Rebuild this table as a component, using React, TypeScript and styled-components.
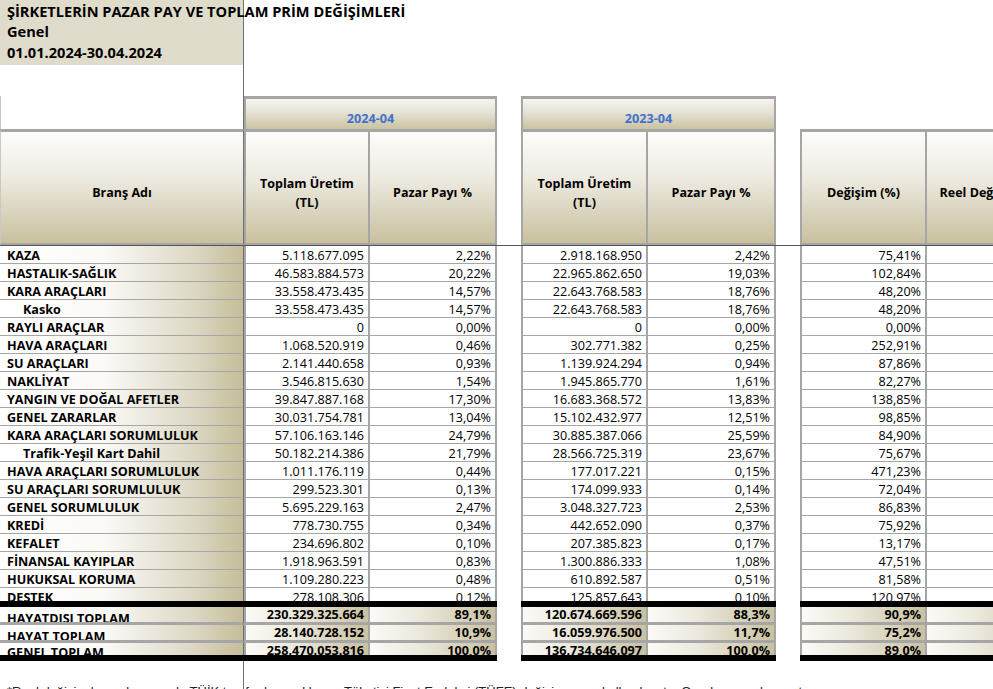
import React from "react";
import styled, { createGlobalStyle } from "styled-components";

const GlobalStyle = createGlobalStyle`
  html, body { margin: 0; padding: 0; background: #ffffff; overflow: hidden; }
  body { font-family: "Open Sans", "Noto Sans", sans-serif; color: #000; }
  #root { width: 993px; height: 689px; overflow: hidden; }
`;

const GRAY = "#a6a6a6";
const DARK = "#707070";
const COLS = "244px 126px 127px 24px 127px 128px 24px 127px 130px";

const Sheet = styled.div`
  width: 1057px;
  display: flex;
  flex-direction: column;
`;

const Row = styled.div<{ $h: number }>`
  display: grid;
  grid-template-columns: ${COLS};
  height: ${(p) => p.$h}px;
`;

const ACell = styled.div`
  box-sizing: border-box;
  border-right: 1px solid ${DARK};
  min-width: 0;
`;

const TitleBlock = styled.div`
  height: 65px;
  background: #e0dccb;
  padding: 0.5px 0 0 7px;
  box-sizing: border-box;
  white-space: nowrap;
`;

const TitleLine = styled.div`
  font-weight: 700;
  font-size: 14.6px;
  line-height: 20.5px;
`;

const BlankA = styled(ACell)`
  border-left: 1px solid #c8c8c8;
`;

const GroupHead = styled.div<{ $span: string }>`
  grid-column: ${(p) => p.$span};
  box-sizing: border-box;
  border: 2px solid ${GRAY};
  border-top-width: 3px;
  border-bottom: 0;
  background: linear-gradient(to bottom, #f6f4ee 0%, #e6e2d4 45%, #cac2a2 100%);
  color: #4170cf;
  font-weight: 700;
  font-size: 12.6px;
  display: flex;
  align-items: center;
  justify-content: center;
  padding-top: 8px;
`;

const HeadCell = styled.div<{ $first?: boolean; $isA?: boolean }>`
  box-sizing: border-box;
  border-top: 3px solid ${GRAY};
  border-bottom: 2px solid ${GRAY};
  border-right: ${(p) => (p.$isA ? `1px solid ${DARK}` : `2px solid ${GRAY}`)};
  border-left: ${(p) => (p.$first ? `2px solid ${GRAY}` : p.$isA ? `1px solid #c8c8c8` : "0")};
  background: linear-gradient(to bottom, #fdfdfb 0%, #eeebe2 40%, #c8c09e 100%);
  font-weight: 700;
  font-size: 12.5px;
  line-height: 19px;
  text-align: center;
  display: flex;
  align-items: center;
  justify-content: center;
  padding-top: 10px;
  white-space: nowrap;
  overflow: hidden;
`;

const Body = styled.div`
  border-top: 1px solid #555;
  display: flex;
  flex-direction: column;
`;

const LabelCell = styled(ACell)<{ $indent?: boolean; $total?: boolean; $last?: boolean; $pad: number }>`
  background: linear-gradient(to right, #ffffff 0%, #fbfaf7 42%, #dedac7 78%, #c5bd99 100%);
  border-bottom: ${(p) => (p.$last ? "0" : `3px solid ${GRAY}`)};
  font-weight: 700;
  font-size: 12.6px;
  line-height: 15px;
  padding-left: ${(p) => (p.$indent ? 23 : 7)}px;
  padding-top: ${(p) => p.$pad}px;
  white-space: nowrap;
  overflow: ${(p) => (p.$last || p.$total ? "hidden" : "visible")};
`;

const ValueCell = styled.div<{ $first?: boolean; $total?: boolean; $last?: boolean; $pad: number }>`
  box-sizing: border-box;
  background: ${(p) =>
    p.$total
      ? "linear-gradient(to right, #fbfaf6 0%, #ebe8dc 40%, #c9c1a0 100%)"
      : "#ffffff"};
  border-bottom: ${(p) => (p.$last ? "0" : `3px solid ${GRAY}`)};
  border-right: 2px solid ${GRAY};
  border-left: ${(p) => (p.$first ? `2px solid ${GRAY}` : "0")};
  font-weight: ${(p) => (p.$total ? 700 : 400)};
  font-size: 12.6px;
  line-height: 15px;
  text-align: right;
  padding-right: 4px;
  padding-top: ${(p) => p.$pad}px;
  white-space: nowrap;
  overflow: ${(p) => (p.$last ? "hidden" : "visible")};
`;

const Gap = styled.div``;

const Bar = styled.div<{ $span: string }>`
  grid-column: ${(p) => p.$span};
  background: #000;
`;

const FootA = styled(ACell)`
  padding: 23px 0 0 7px;
  white-space: nowrap;
  overflow: visible;
  font-family: "Liberation Sans", Arial, sans-serif;
  font-size: 13px;
  line-height: 16px;
  color: #222;
`;

type DataRow = {
  name: string;
  indent?: boolean;
  v: [string, string, string, string, string, string];
};

const rows: DataRow[] = [
  { name: "KAZA", v: ["5.118.677.095", "2,22%", "2.918.168.950", "2,42%", "75,41%", ""] },
  { name: "HASTALIK-SAĞLIK", v: ["46.583.884.573", "20,22%", "22.965.862.650", "19,03%", "102,84%", ""] },
  { name: "KARA ARAÇLARI", v: ["33.558.473.435", "14,57%", "22.643.768.583", "18,76%", "48,20%", ""] },
  { name: "Kasko", indent: true, v: ["33.558.473.435", "14,57%", "22.643.768.583", "18,76%", "48,20%", ""] },
  { name: "RAYLI ARAÇLAR", v: ["0", "0,00%", "0", "0,00%", "0,00%", ""] },
  { name: "HAVA ARAÇLARI", v: ["1.068.520.919", "0,46%", "302.771.382", "0,25%", "252,91%", ""] },
  { name: "SU ARAÇLARI", v: ["2.141.440.658", "0,93%", "1.139.924.294", "0,94%", "87,86%", ""] },
  { name: "NAKLİYAT", v: ["3.546.815.630", "1,54%", "1.945.865.770", "1,61%", "82,27%", ""] },
  { name: "YANGIN VE DOĞAL AFETLER", v: ["39.847.887.168", "17,30%", "16.683.368.572", "13,83%", "138,85%", ""] },
  { name: "GENEL ZARARLAR", v: ["30.031.754.781", "13,04%", "15.102.432.977", "12,51%", "98,85%", ""] },
  { name: "KARA ARAÇLARI SORUMLULUK", v: ["57.106.163.146", "24,79%", "30.885.387.066", "25,59%", "84,90%", ""] },
  { name: "Trafik-Yeşil Kart Dahil", indent: true, v: ["50.182.214.386", "21,79%", "28.566.725.319", "23,67%", "75,67%", ""] },
  { name: "HAVA ARAÇLARI SORUMLULUK", v: ["1.011.176.119", "0,44%", "177.017.221", "0,15%", "471,23%", ""] },
  { name: "SU ARAÇLARI SORUMLULUK", v: ["299.523.301", "0,13%", "174.099.933", "0,14%", "72,04%", ""] },
  { name: "GENEL SORUMLULUK", v: ["5.695.229.163", "2,47%", "3.048.327.723", "2,53%", "86,83%", ""] },
  { name: "KREDİ", v: ["778.730.755", "0,34%", "442.652.090", "0,37%", "75,92%", ""] },
  { name: "KEFALET", v: ["234.696.802", "0,10%", "207.385.823", "0,17%", "13,17%", ""] },
  { name: "FİNANSAL KAYIPLAR", v: ["1.918.963.591", "0,83%", "1.300.886.333", "1,08%", "47,51%", ""] },
  { name: "HUKUKSAL KORUMA", v: ["1.109.280.223", "0,48%", "610.892.587", "0,51%", "81,58%", ""] },
  { name: "DESTEK", v: ["278.108.306", "0,12%", "125.857.643", "0,10%", "120,97%", ""] },
];

const totals: DataRow[] = [
  { name: "HAYATDISI TOPLAM", v: ["230.329.325.664", "89,1%", "120.674.669.596", "88,3%", "90,9%", ""] },
  { name: "HAYAT TOPLAM", v: ["28.140.728.152", "10,9%", "16.059.976.500", "11,7%", "75,2%", ""] },
  { name: "GENEL TOPLAM", v: ["258.470.053.816", "100,0%", "136.734.646.097", "100,0%", "89,0%", ""] },
];

function Line({
  r,
  h,
  total,
  last,
  labelPad,
  valuePad,
}: {
  r: DataRow;
  h: number;
  total?: boolean;
  last?: boolean;
  labelPad: number;
  valuePad: number;
}) {
  const [b, c, d, e, f, g] = r.v;
  const common = { $total: total, $last: last, $pad: valuePad };
  return (
    <Row $h={h}>
      <LabelCell $indent={r.indent} $total={total} $last={last} $pad={labelPad}>
        {r.name}
      </LabelCell>
      <ValueCell $first {...common}>{b}</ValueCell>
      <ValueCell {...common}>{c}</ValueCell>
      <Gap />
      <ValueCell $first {...common}>{d}</ValueCell>
      <ValueCell {...common}>{e}</ValueCell>
      <Gap />
      <ValueCell $first {...common}>{f}</ValueCell>
      <ValueCell {...common}>{g}</ValueCell>
    </Row>
  );
}

function BarRow() {
  return (
    <Row $h={6}>
      <Bar $span="1 / 4" />
      <Gap />
      <Bar $span="5 / 7" />
      <Gap />
      <Bar $span="8 / 10" />
    </Row>
  );
}

export default function App() {
  return (
    <>
      <GlobalStyle />
      <Sheet>
        <Row $h={96}>
          <ACell>
            <TitleBlock>
              <TitleLine>ŞİRKETLERİN PAZAR PAY VE TOPLAM PRİM DEĞİŞİMLERİ</TitleLine>
              <TitleLine>Genel</TitleLine>
              <TitleLine>01.01.2024-30.04.2024</TitleLine>
            </TitleBlock>
          </ACell>
        </Row>
        <Row $h={33}>
          <BlankA />
          <GroupHead $span="2 / 4">2024-04</GroupHead>
          <Gap />
          <GroupHead $span="5 / 7">2023-04</GroupHead>
        </Row>
        <Row $h={116}>
          <HeadCell $isA>Branş Adı</HeadCell>
          <HeadCell $first>Toplam Üretim<br />(TL)</HeadCell>
          <HeadCell>Pazar Payı %</HeadCell>
          <Gap />
          <HeadCell $first>Toplam Üretim<br />(TL)</HeadCell>
          <HeadCell>Pazar Payı %</HeadCell>
          <Gap />
          <HeadCell $first>Değişim (%)</HeadCell>
          <HeadCell>Reel Değişim (%)</HeadCell>
        </Row>
        <Body>
          {rows.map((r, i) => {
            const last = i === rows.length - 1;
            return (
              <Line key={r.name + i} r={r} h={last ? 13 : 18} last={last} labelPad={1.5} valuePad={1.5} />
            );
          })}
          <BarRow />
          {totals.map((r, i) => {
            const last = i === totals.length - 1;
            return (
              <Line
                key={r.name}
                r={r}
                total
                h={last ? 12 : 18}
                last={last}
                labelPad={last ? 1.5 : 3.5}
                valuePad={-1}
              />
            );
          })}
          <BarRow />
          <Row $h={40}>
            <FootA>
              *Reel değişim hesaplamasında TÜİK tarafından açıklanan Tüketici Fiyat Endeksi (TÜFE) değişim oranı kullanılmıştır. Oranlar yuvarlanmıştır.
            </FootA>
          </Row>
        </Body>
      </Sheet>
    </>
  );
}
